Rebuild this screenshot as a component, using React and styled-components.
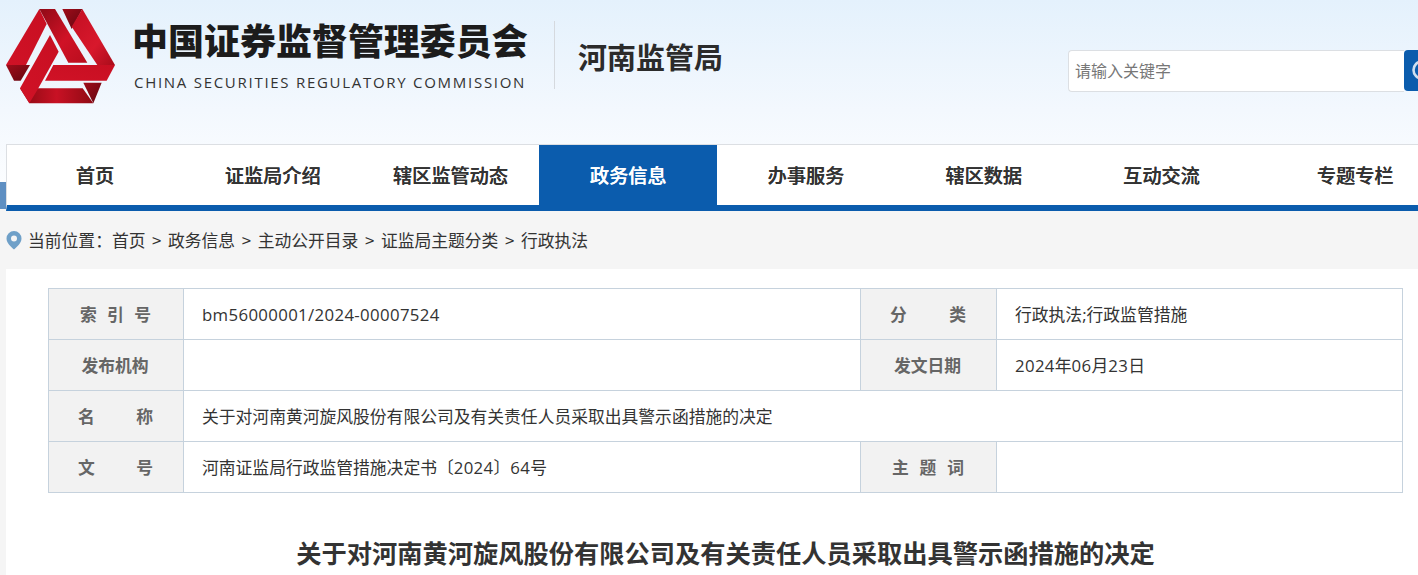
import React from "react";
import styled, { createGlobalStyle } from "styled-components";

const FONT = `"Noto Sans CJK SC", "Open Sans", sans-serif`;
const MIXED = `"Open Sans", "Noto Sans CJK SC", sans-serif`;

const Global = createGlobalStyle`
  html, body { margin: 0; padding: 0; background: #f5f5f5; overflow: hidden; }
  body { font-family: ${FONT}; color: #333; }
  * { box-sizing: border-box; }
`;

const Page = styled.div`
  width: 1418px;
  height: 575px;
  overflow: hidden;
  position: relative;
`;

const Header = styled.header`
  height: 183px;
  background: linear-gradient(180deg, #e4f1fc 0%, #f3f8fe 60%, #fbfdff 100%);
  display: flex;
  align-items: flex-start;
  padding: 0 0 0 6px;
`;

const LogoMark = styled.svg`
  width: 180px;
  height: 120px;
  margin-left: -6px;
  flex: none;
`;

const Brand = styled.div`
  margin-left: -48px;
  margin-top: 16px;
  width: 395px;
  flex: none;
`;

const BrandCn = styled.div`
  font-size: 36px;
  line-height: 46px;
  font-weight: 900;
  color: #1c1c1c;
  white-space: nowrap;
  letter-spacing: -0.02px;
`;

const BrandEn = styled.div`
  font-family: "Open Sans", sans-serif;
  font-size: 15px;
  line-height: 20px;
  margin-top: 10px;
  margin-left: 2px;
  letter-spacing: 1.72px;
  color: #333;
  white-space: nowrap;
`;

const Divider = styled.div`
  width: 1px;
  height: 68px;
  margin: 21px 0 0 27px;
  background: #d5d9de;
  flex: none;
`;

const Branch = styled.div`
  margin: 36px 0 0 23px;
  font-size: 29px;
  line-height: 40px;
  font-weight: 700;
  color: #2b2b2b;
  white-space: nowrap;
  flex: none;
`;

const Search = styled.form`
  display: flex;
  margin: 50px 0 0 345px;
  flex: none;
`;

const SearchInput = styled.input`
  width: 336px;
  height: 42px;
  padding: 0 6px 3px;
  border: 1px solid #dcdfe3;
  border-right: 0;
  border-radius: 4px 0 0 4px;
  background: #fff;
  font-family: ${FONT};
  font-size: 16px;
  outline: none;
  &::placeholder { color: #777; opacity: 1; }
`;

const SearchButton = styled.button`
  width: 60px;
  height: 41px;
  border: 0;
  border-radius: 4px;
  background: #0b5cad;
  padding: 0 0 0 7px;
  display: flex;
  align-items: center;
  justify-content: flex-start;
`;

const NavWrap = styled.div`
  height: 28px;
  margin-top: -1px;
`;

const Strip = styled.div`
  height: 27px;
  width: 100%;
  background: #5e8fc2;
`;

const Nav = styled.nav`
  position: absolute;
  top: 144px;
  left: 6px;
  width: 1500px;
  height: 67px;
  background: #fff;
  border-top: 1px solid #dcdfe3;
  border-left: 1px solid #dcdfe3;
  border-bottom: 6px solid #0b5cad;
  display: flex;
`;

const NavItem = styled.a`
  flex: none;
  width: 177.75px;
  height: 60px;
  margin-left: ${(p) => p.$offset}px;
  display: flex;
  align-items: center;
  justify-content: center;
  font-size: 19.2px;
  font-weight: 500;
  text-shadow: 0.3px 0 0 currentColor;
  color: ${(p) => (p.$active ? "#fff" : "#333")};
  background: ${(p) => (p.$active ? "#0b5cad" : "transparent")};
`;

const Crumbs = styled.div`
  height: 59px;
  padding: 1px 0 0 6px;
  display: flex;
  align-items: center;
  font-size: 16.8px;
  color: #333;
  white-space: nowrap;
`;

const Pin = styled.svg`
  width: 16px;
  height: 20px;
  margin-right: 6px;
  flex: none;
`;

const Sep = styled.span`
  margin: 0 6.6px;
`;

const Card = styled.main`
  margin-left: 6px;
  background: #fff;
  padding: 19px 15px 0 42px;
  height: 307px;
`;

const Table = styled.div`
  display: grid;
  grid-template-columns: 135px 677px 136px 406px;
  border-top: 1px solid #c6d2dd;
  border-left: 1px solid #c6d2dd;
  width: 1355px;
`;

const Label = styled.div`
  height: 51px;
  display: flex;
  align-items: center;
  justify-content: ${(p) => (p.$spread ? "space-between" : "center")};
  padding: ${(p) => (p.$spread ? `0 ${p.$spread}px 0 ${p.$spread - 1}px` : "0 2px 0 0")};
  background: #f2f2f2;
  border-right: 1px solid #c6d2dd;
  border-bottom: 1px solid #c6d2dd;
  font-size: 16.8px;
  font-weight: 700;
  color: #666;
`;

const Value = styled.div`
  grid-column: ${(p) => (p.$wide ? "span 3" : "auto")};
  height: 51px;
  display: flex;
  align-items: center;
  padding-left: 18px;
  border-right: 1px solid #c6d2dd;
  border-bottom: 1px solid #c6d2dd;
  font-family: ${MIXED};
  font-size: 16.8px;
  color: #333;
  white-space: pre;
`;

const Num = styled.span`
  letter-spacing: 0.35px;
`;

const Title = styled.h1`
  margin: 41px 0 0;
  width: 1355px;
  text-align: center;
  font-size: 25.25px;
  line-height: 36px;
  font-weight: 700;
  color: #333;
  white-space: nowrap;
`;

const Spread = ({ text, pad }) => (
  <Label $spread={pad}>
    {text.split("").map((c) => (
      <span key={c}>{c}</span>
    ))}
  </Label>
);

const NAV = ["首页", "证监局介绍", "辖区监管动态", "政务信息", "办事服务", "辖区数据", "互动交流", "专题专栏"];
const CRUMBS = ["首页", "政务信息", "主动公开目录", "证监局主题分类", "行政执法"];

export default function App() {
  return (
    <Page>
      <Global />
      <Header>
        <LogoMark viewBox="0 0 540 360" aria-label="logo">
          <defs>
            <linearGradient id="r1" x1="0" y1="0" x2="1" y2="1">
              <stop offset="0" stopColor="#8f0a16" />
              <stop offset="0.55" stopColor="#d01226" />
              <stop offset="1" stopColor="#b80e1e" />
            </linearGradient>
            <linearGradient id="r2" x1="0" y1="1" x2="1" y2="0">
              <stop offset="0" stopColor="#d01226" />
              <stop offset="1" stopColor="#c80f22" />
            </linearGradient>
            <linearGradient id="r3" x1="0" y1="0" x2="1" y2="0">
              <stop offset="0" stopColor="#8a0912" />
              <stop offset="0.5" stopColor="#c81124" />
              <stop offset="1" stopColor="#8f0a14" />
            </linearGradient>
            <linearGradient id="r4" x1="0" y1="0" x2="1" y2="1">
              <stop offset="0" stopColor="#c20f22" />
              <stop offset="0.6" stopColor="#d8182c" />
              <stop offset="1" stopColor="#a80c1a" />
            </linearGradient>
            <linearGradient id="d1" x1="0" y1="0" x2="1" y2="1">
              <stop offset="0" stopColor="#a00d1a" />
              <stop offset="1" stopColor="#640610" />
            </linearGradient>
          </defs>
          <polygon fill="url(#d1)" points="18,195 90,195 62,242 42,242" />
          <polygon fill="url(#r2)" points="118,27 140,72 78,195 18,195" />
          <polygon fill="url(#d1)" points="187,27 247,27 215,87" />
          <polygon fill="url(#r4)" points="247,27 345,195 292,195 215,80" />
          <polygon fill="url(#r1)" points="118,27 165,27 262,188 205,188" />
          <polygon fill="url(#d1)" points="250,248 305,248 280,310" />
          <polygon fill="url(#r3)" points="60,265 248,265 280,310 88,310" />
          <polygon fill="url(#r2)" points="150,105 176,155 115,265 88,310 60,265" />
          <polygon fill="url(#r2)" points="160,195 345,195 320,242 135,242" />
        </LogoMark>
        <Brand>
          <BrandCn>中国证券监督管理委员会</BrandCn>
          <BrandEn>CHINA SECURITIES REGULATORY COMMISSION</BrandEn>
        </Brand>
        <Divider />
        <Branch>河南监管局</Branch>
        <Search onSubmit={(e) => e.preventDefault()}>
          <SearchInput placeholder="请输入关键字" />
          <SearchButton type="button" aria-label="搜索">
            <svg width="24" height="24" viewBox="0 0 24 24" fill="none">
              <circle cx="11" cy="11" r="8.5" stroke="#cfdff0" strokeWidth="2.6" />
              <line x1="17" y1="17" x2="23" y2="23" stroke="#cfdff0" strokeWidth="2.6" />
            </svg>
          </SearchButton>
        </Search>
      </Header>
      <NavWrap>
        <Strip />
      </NavWrap>
      <Nav>
        {NAV.map((n, i) => (
          <NavItem
            key={n}
            $offset={i === 0 ? -1 : i === NAV.length - 1 ? 16 : 0}
            $active={n === "政务信息"}
          >
            {n}
          </NavItem>
        ))}
      </Nav>
      <Crumbs>
        <Pin viewBox="0 0 16 20">
          <path
            fill="#6fa0c8"
            fillRule="evenodd"
            d="M8 1a7.5 7.5 0 0 0-7.5 7.5C.5 13 5 17 8 19.5c3-2.5 7.5-6.5 7.5-11A7.5 7.5 0 0 0 8 1zm0 4.5a3 3 0 1 1 0 6 3 3 0 0 1 0-6z"
          />
        </Pin>
        当前位置：
        {CRUMBS.map((c, i) => (
          <React.Fragment key={c}>
            {i > 0 && <Sep>&gt;</Sep>}
            <span>{c}</span>
          </React.Fragment>
        ))}
      </Crumbs>
      <Card>
        <Table>
          <Spread text="索引号" pad={32} />
          <Value><Num>bm56000001/2024-00007524</Num></Value>
          <Spread text="分类" pad={30} />
          <Value>行政执法;行政监管措施</Value>
          <Label>发布机构</Label>
          <Value />
          <Label>发文日期</Label>
          <Value><Num>2024</Num>年<Num>06</Num>月<Num>23</Num>日</Value>
          <Spread text="名称" pad={30} />
          <Value $wide>关于对河南黄河旋风股份有限公司及有关责任人员采取出具警示函措施的决定</Value>
          <Spread text="文号" pad={30} />
          <Value>河南证监局行政监管措施决定书〔<Num>2024</Num>〕<Num>64</Num>号</Value>
          <Spread text="主题词" pad={32} />
          <Value />
        </Table>
        <Title>关于对河南黄河旋风股份有限公司及有关责任人员采取出具警示函措施的决定</Title>
      </Card>
    </Page>
  );
}
